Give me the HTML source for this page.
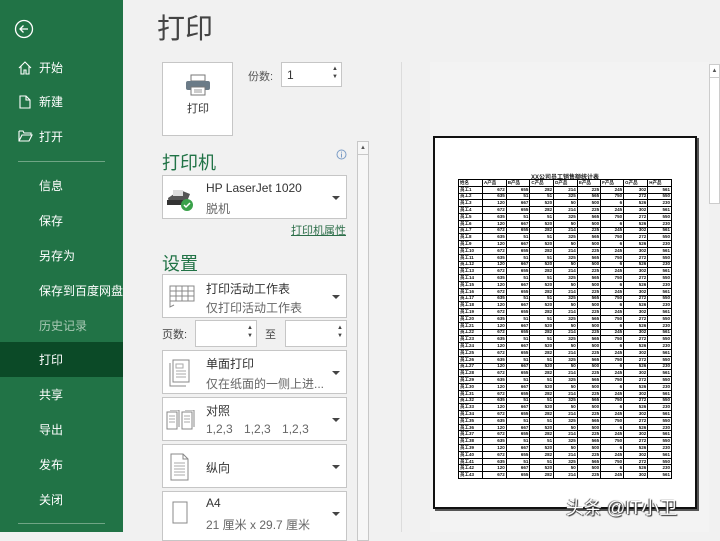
<!DOCTYPE html>
<html><head><meta charset="utf-8"><style>
*{margin:0;padding:0;box-sizing:border-box}
body{width:720px;height:532px;overflow:hidden;background:#f1f1f1;font-family:"Liberation Sans","Noto Sans CJK SC",sans-serif;position:relative}
.side{position:absolute;left:0;top:0;width:123px;height:532px;background:#217346;color:#fff}
.side .it{position:absolute;left:39px;font-size:12px;line-height:14px}
.sel{position:absolute;left:0;top:342px;width:123px;height:35px;background:#0b4a27}
.sep{position:absolute;left:18px;width:87px;height:1px;background:#6fa585}
.abs{position:absolute}
.box{position:absolute;background:#fff;border:1px solid #c6c6c6}
.dd{position:absolute;left:162px;width:185px;background:#fff;border:1px solid #c6c6c6}
.dd .t1{position:absolute;left:43px;font-size:12px;color:#333}
.dd .t2{position:absolute;left:43px;font-size:12px;color:#666}
.arr{position:absolute;right:6px;width:0;height:0;border-left:4px solid transparent;border-right:4px solid transparent;border-top:4px solid #444}
h2{position:absolute;left:162px;font-size:18px;font-weight:normal;color:#217346}
.page{position:absolute;left:433px;top:136px;width:264px;height:373px;background:#fff;border:2px solid #111;box-shadow:2px 2px 0 #555}
table{position:absolute;left:23px;top:41px;border-collapse:collapse;width:214px}
td{border:1px solid #000;height:6.8px;font-size:4.5px;line-height:4px;padding:0 1px;text-align:right;color:#111;font-weight:bold}
td:first-child{width:24px;text-align:left}
</style></head><body>
<div class="side">
<svg class="abs" style="left:14px;top:19px" width="20" height="20"><circle cx="10" cy="10" r="8.5" fill="none" stroke="#fff" stroke-width="1.3"/><path d="M14 10H6M9.5 6.5L6 10l3.5 3.5" fill="none" stroke="#fff" stroke-width="1.3"/></svg>
<svg class="abs" style="left:18px;top:61px" width="14" height="14"><path d="M1 7L7 1l6 6M3 5v8h3V9h2v4h3V5" fill="none" stroke="#fff" stroke-width="1.1"/></svg>
<div class="it" style="left:39px;top:61px">开始</div>
<svg class="abs" style="left:19px;top:95px" width="12" height="14"><path d="M1 1h6l4 4v8H1z M7 1v4h4" fill="none" stroke="#fff" stroke-width="1.1"/></svg>
<div class="it" style="top:95px">新建</div>
<svg class="abs" style="left:18px;top:130px" width="15" height="12"><path d="M1 1h4l1 2h7v2 M1 1v10h10l3-6H4L1 11" fill="none" stroke="#fff" stroke-width="1.1"/></svg>
<div class="it" style="top:130px">打开</div>
<div class="sep" style="top:161px"></div>
<div class="it" style="top:179px">信息</div>
<div class="it" style="top:214px">保存</div>
<div class="it" style="top:249px">另存为</div>
<div class="it" style="top:284px">保存到百度网盘</div>
<div class="it" style="top:319px;color:#a9c9b5">历史记录</div>
<div class="sel"></div>
<div class="it" style="top:353px">打印</div>
<div class="it" style="top:388px">共享</div>
<div class="it" style="top:423px">导出</div>
<div class="it" style="top:458px">发布</div>
<div class="it" style="top:493px">关闭</div>
<div class="sep" style="top:523px"></div>
</div>

<div class="abs" style="left:157px;top:12px;font-size:28px;color:#444;line-height:34px">打印</div>
<div class="box" style="left:162px;top:62px;width:71px;height:74px">
<svg class="abs" style="left:22px;top:11px" width="26" height="22"><rect x="6" y="1" width="14" height="6" fill="#fff" stroke="#777"/><rect x="1" y="7" width="24" height="9" rx="2" fill="#6b7b87"/><rect x="6" y="13" width="14" height="8" fill="#fff" stroke="#777"/><path d="M9 16h8M9 18h8" stroke="#999"/></svg>
<div class="abs" style="left:24px;top:37px;font-size:11px;color:#333">打印</div>
</div>
<div class="abs" style="left:248px;top:68px;font-size:11px;color:#555">份数:</div>
<div class="box" style="left:281px;top:62px;width:61px;height:25px"><div class="abs" style="left:5px;top:5px;font-size:12px;color:#333">1</div><div class="abs" style="right:3px;top:2px;font-size:6px;color:#444;line-height:8px">▲<br>▼</div></div>

<h2 style="top:149px">打印机</h2>
<svg class="abs" style="left:336px;top:149px" width="11" height="11"><circle cx="5.5" cy="5.5" r="4.5" fill="none" stroke="#7a9cc6"/><path d="M5.5 4.5v4M5.5 2.6v1" stroke="#7a9cc6"/></svg>
<div class="dd" style="top:175px;height:44px">
<svg class="abs" style="left:2px;top:10px" width="30" height="26"><path d="M3 12l12-8 10 4-4 10H4z" fill="#555"/><rect x="8" y="4" width="10" height="6" fill="#ddd"/><rect x="2" y="14" width="16" height="5" fill="#333"/><circle cx="22" cy="19" r="6" fill="#3aa14a"/><path d="M19 19l2 2 4-4" stroke="#fff" stroke-width="1.5" fill="none"/></svg>
<div class="t1" style="top:5px">HP LaserJet 1020</div><div class="t2" style="top:24px">脱机</div><div class="arr" style="top:20px"></div></div>
<div class="abs" style="left:291px;top:222px;font-size:11px;color:#2c6e49;text-decoration:underline">打印机属性</div>

<h2 style="top:250px">设置</h2>
<div class="dd" style="top:274px;height:44px">
<svg class="abs" style="left:6px;top:10px" width="26" height="24"><path d="M1 1h24v15H1zM1 6h24M1 11h24M7 1v15M13 1v15M19 1v15M1 16v6l4-2" fill="none" stroke="#888"/></svg>
<div class="t1" style="top:5px">打印活动工作表</div><div class="t2" style="top:24px">仅打印活动工作表</div><div class="arr" style="top:20px"></div></div>
<div class="abs" style="left:162px;top:326px;font-size:11px;color:#444">页数:</div>
<div class="box" style="left:195px;top:320px;width:62px;height:27px"><div class="abs" style="right:3px;top:3px;font-size:6px;color:#444;line-height:8px">▲<br>▼</div></div>
<div class="abs" style="left:265px;top:326px;font-size:11px;color:#444">至</div>
<div class="box" style="left:285px;top:320px;width:62px;height:27px"><div class="abs" style="right:3px;top:3px;font-size:6px;color:#444;line-height:8px">▲<br>▼</div></div>
<div class="dd" style="top:350px;height:44px">
<svg class="abs" style="left:6px;top:8px" width="22" height="28"><path d="M4 1h16v22H4zM1 4v23h16" fill="none" stroke="#888"/><path d="M7 5h7v4H7zM7 12h10M7 15h10M7 18h10" fill="none" stroke="#aaa"/></svg>
<div class="t1" style="top:4px">单面打印</div><div class="t2" style="top:24px">仅在纸面的一侧上进...</div><div class="arr" style="top:20px"></div></div>
<div class="dd" style="top:397px;height:44px">
<svg class="abs" style="left:3px;top:12px" width="30" height="20"><path d="M1 2v17h10V2zM4 0h9v17M16 2v17h10V2zM19 0h9v17" fill="none" stroke="#888"/><path d="M3 6h6M3 9h6M3 12h6M18 6h6M18 9h6M18 12h6" stroke="#aaa"/></svg>
<div class="t1" style="top:4px">对照</div><div class="t2" style="top:24px;word-spacing:8px">1,2,3 1,2,3 1,2,3</div><div class="arr" style="top:20px"></div></div>
<div class="dd" style="top:444px;height:44px">
<svg class="abs" style="left:7px;top:8px" width="20" height="28"><path d="M1 1h12l5 5v21H1zM13 1v5h5" fill="none" stroke="#888"/><path d="M4 10h11M4 13h11M4 16h11M4 19h11M4 22h11" stroke="#aaa"/></svg>
<div class="t1" style="top:14px">纵向</div><div class="arr" style="top:20px"></div></div>
<div class="dd" style="top:491px;height:50px">
<svg class="abs" style="left:9px;top:9px" width="16" height="24"><rect x="1" y="1" width="14" height="21" fill="none" stroke="#888"/></svg>
<div class="t1" style="top:4px">A4</div><div class="t2" style="top:24px">21 厘米 x 29.7 厘米</div><div class="arr" style="top:20px"></div></div>

<div class="abs" style="left:357px;top:141px;width:12px;height:400px;border:1px solid #c8c8c8;background:#f7f7f7"><div style="font-size:6px;color:#555;text-align:center;border-bottom:1px solid #c8c8c8;height:13px;line-height:12px">▲</div></div>
<div class="abs" style="left:401px;top:62px;width:1px;height:470px;background:#dcdcdc"></div>
<div class="abs" style="left:430px;top:62px;width:279px;height:470px;background:#f3f3f3"></div>
<div class="abs" style="left:709px;top:64px;width:11px;height:140px;background:#fff;border:1px solid #ccc"><div style="font-size:6px;color:#555;text-align:center;border-bottom:1px solid #ccc;height:13px;line-height:12px">▲</div></div>

<div class="page">
<div class="abs" style="left:0;width:260px;top:34px;text-align:center;font-size:6px;font-weight:bold;color:#222">XX公司员工销售额统计表</div>
<table id="t"></table>
</div>
<div class="abs" style="left:566px;top:494px;font-size:18px;color:#fff;text-shadow:1px 1px 1px #222,-1px 0 1px #444">头条 @IT小卫</div>
<script>
var h='<tr><td>姓名</td>';for(var i=0;i<8;i++)h+='<td style="text-align:left">'+'ABCDEFGH'[i]+'产品</td>';h+='</tr>';
var n=[672,655,282,214,225,245,302,561,635,51,51,325,565,750,272,550,120,667,520,50,500,6,526,230];
for(var r=0;r<43;r++){h+='<tr><td>员工'+(r+1)+'</td>';for(var c=0;c<8;c++)h+='<td>'+n[(r*8+c)%n.length]+'</td>';h+='</tr>';}
document.getElementById('t').innerHTML=h;
</script>
</body></html>
